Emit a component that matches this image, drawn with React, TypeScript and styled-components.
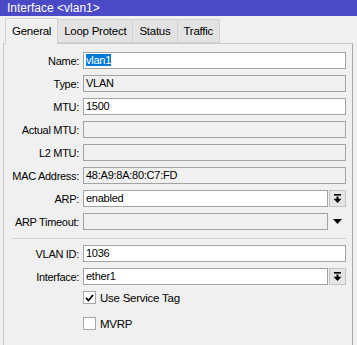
import React, { FC } from 'react';
import styled, { createGlobalStyle } from 'styled-components';

const GlobalStyle = createGlobalStyle`
  html, body {
    margin: 0;
    padding: 0;
    background: #f0f0f0;
    font-family: 'Liberation Sans', Arial, sans-serif;
    font-size: 11px;
    letter-spacing: -0.25px;
    color: #000;
  }
`;

const Window = styled.div`
  width: 357px;
  height: 345px;
  overflow: hidden;
  display: flex;
  flex-direction: column;
  background: #f0f0f0;
`;

const TitleBar = styled.div`
  height: 16px;
  background: #4a4ac6;
  color: #fff;
  font-size: 12px;
  letter-spacing: 0;
  line-height: 16px;
  padding-left: 7px;
`;

const TabStrip = styled.div`
  display: flex;
  align-items: flex-end;
  margin-top: 2px;
  padding-left: 5px;
`;

const Tab = styled.div<{ $active?: boolean }>`
  height: ${({ $active }) => ($active ? '25px' : '22px')};
  line-height: ${({ $active }) => ($active ? '24px' : '22px')};
  padding: 0 6px;
  font-size: 11.5px;
  background: ${({ $active }) => ($active ? '#f0f0f0' : '#e3e3e3')};
  border: 1px solid #d2d2d2;
  border-bottom: ${({ $active }) => ($active ? 'none' : '1px solid #d2d2d2')};
  margin-left: ${({ $active }) => ($active ? '0' : '-1px')};
  position: relative;
  z-index: ${({ $active }) => ($active ? 1 : 0)};
  margin-bottom: ${({ $active }) => ($active ? '-1px' : '0')};
`;

const Panel = styled.div`
  flex: 1;
  margin: 0 4px 0 3px;
  border: 1px solid #c8c8c8;
  border-right-color: #a8a8a8;
  border-bottom: none;
  padding: 8px 6px 0 0;
  display: flex;
  flex-direction: column;
  gap: 6px;
`;

const Row = styled.div`
  display: flex;
  align-items: center;
  height: 17px;
  gap: 4px;
`;

const Label = styled.div`
  width: 75px;
  text-align: right;
  white-space: nowrap;
  letter-spacing: -0.3px;
`;

const Field = styled.div<{ $editable?: boolean }>`
  flex: 1;
  height: 17px;
  box-sizing: border-box;
  border: 1px solid #a3a3a3;
  background: ${({ $editable }) => ($editable ? '#ffffff' : '#f0f0f0')};
  padding-left: 2px;
  line-height: 15px;
  white-space: nowrap;
  overflow: hidden;
`;

const Selected = styled.span`
  background: #0078d7;
  color: #fff;
`;

const DropButton = styled.div`
  width: 17px;
  height: 17px;
  box-sizing: border-box;
  border: 1px solid #c4c4c4;
  background: #e6e6e6;
  display: flex;
  align-items: center;
  justify-content: center;
  margin-left: -3px;
`;

const ArrowSlot = styled.div`
  width: 17px;
  height: 17px;
  display: flex;
  align-items: center;
  justify-content: center;
  margin-left: -3px;
`;

const Separator = styled.div`
  height: 1px;
  background: #cfcfcf;
  margin: 2px 0 0 8px;
`;

const CheckRow = styled.label`
  display: flex;
  align-items: flex-start;
  height: 20px;
  padding-left: 79px;
  gap: 4px;
`;

const Box = styled.span`
  width: 13px;
  height: 13px;
  box-sizing: border-box;
  border: 1px solid #a8a8a8;
  background: #fff;
  display: flex;
  align-items: center;
  justify-content: center;
`;

const CheckText = styled.span`
  line-height: 14px;
  font-size: 11.5px;
`;

const PinArrow: FC = () => (
  <svg width="9" height="10" viewBox="0 0 9 10">
    <rect x="1" y="0" width="7" height="1.6" fill="#000" />
    <rect x="3.5" y="2.5" width="2" height="2.5" fill="#000" />
    <polygon points="0.5,4.8 8.5,4.8 4.5,9" fill="#000" />
  </svg>
);

const DownArrow: FC = () => (
  <svg width="9" height="5" viewBox="0 0 9 5">
    <polygon points="0,0 9,0 4.5,5" fill="#000" />
  </svg>
);

const Check: FC = () => (
  <svg width="9" height="8" viewBox="0 0 9 8">
    <polyline points="1,4 3.5,6.5 8,1" fill="none" stroke="#000" strokeWidth="1.8" />
  </svg>
);

const tabs = ['General', 'Loop Protect', 'Status', 'Traffic'];

const App: FC = () => (
  <>
    <GlobalStyle />
    <Window>
      <TitleBar>Interface &lt;vlan1&gt;</TitleBar>
      <TabStrip>
        {tabs.map((t, i) => (
          <Tab key={t} $active={i === 0}>{t}</Tab>
        ))}
      </TabStrip>
      <Panel>
        <Row>
          <Label>Name:</Label>
          <Field $editable><Selected>vlan1</Selected></Field>
        </Row>
        <Row>
          <Label>Type:</Label>
          <Field>VLAN</Field>
        </Row>
        <Row>
          <Label>MTU:</Label>
          <Field $editable>1500</Field>
        </Row>
        <Row>
          <Label>Actual MTU:</Label>
          <Field />
        </Row>
        <Row>
          <Label>L2 MTU:</Label>
          <Field />
        </Row>
        <Row>
          <Label>MAC Address:</Label>
          <Field>48:A9:8A:80:C7:FD</Field>
        </Row>
        <Row>
          <Label>ARP:</Label>
          <Field $editable>enabled</Field>
          <DropButton><PinArrow /></DropButton>
        </Row>
        <Row>
          <Label>ARP Timeout:</Label>
          <Field />
          <ArrowSlot><DownArrow /></ArrowSlot>
        </Row>
        <Separator />
        <Row>
          <Label>VLAN ID:</Label>
          <Field $editable>1036</Field>
        </Row>
        <Row>
          <Label>Interface:</Label>
          <Field $editable>ether1</Field>
          <DropButton><PinArrow /></DropButton>
        </Row>
        <CheckRow>
          <Box><Check /></Box>
          <CheckText>Use Service Tag</CheckText>
        </CheckRow>
        <CheckRow>
          <Box />
          <CheckText>MVRP</CheckText>
        </CheckRow>
      </Panel>
    </Window>
  </>
);

export default App;
